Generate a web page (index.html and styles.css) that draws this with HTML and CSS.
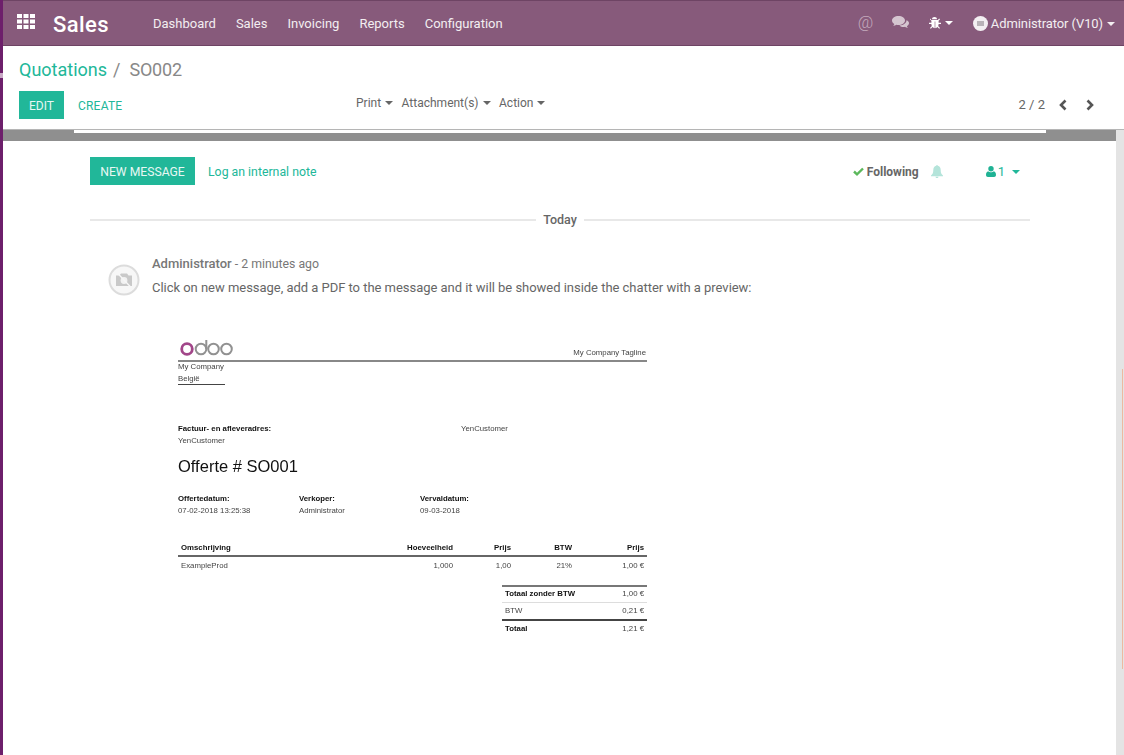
FILE: index.html
```html
<!DOCTYPE html>
<html lang="en">
<head>
  <meta charset="UTF-8">
  <meta name="viewport" content="width=device-width, initial-scale=1.0">
  <link rel="stylesheet" href="styles.css">
  <title>SO002 - Odoo</title>
</head>
<body>
  <div class="app">
    <nav class="navbar">
      <svg class="apps-icon" width="18" height="16" viewBox="0 0 18 16"><path fill="#fff" d="M0 0h5v4H0zM6.500 0h5v4h-5zM13 0h5v4h-5zM0 5.500h5v4H0zM6.500 5.500h5v4h-5zM13 5.500h5v4h-5zM0 11h5v4H0zM6.500 11h5v4h-5zM13 11h5v4h-5z"/></svg>
      <span class="brand">Sales</span>
      <ul class="menu">
        <li>Dashboard</li>
        <li>Sales</li>
        <li>Invoicing</li>
        <li>Reports</li>
        <li>Configuration</li>
      </ul>
      <div class="systray">
        <span class="at-icon">@</span>
        <svg class="chat-icon" width="17" height="15" viewBox="0 0 17 15"><path fill="#d5c5d0" d="M6.500 1C3 1 0 3 0 5.500c0 1.400.9 2.700 2.300 3.500-.2.700-.6 1.300-1.100 1.800 1 0 2.200-.5 3-1.100.7.200 1.500.3 2.300.3 3.600 0 6.500-2 6.500-4.500S10.100 1 6.500 1z"/><path fill="#d5c5d0" d="M14.500 5.300c0 2.800-3 5-7 5.200 1 1 2.500 1.500 4 1.500.5 0 1-.1 1.500-.2.800.7 2 1.200 3 1.200-.5-.5-.9-1.100-1.100-1.800 1.300-.8 2.100-2 2.100-3.200 0-1-.9-2-2.500-2.700z"/></svg>
        <span class="bug">
          <svg width="13" height="14" viewBox="0 0 13 14"><path fill="#fff" d="M4 3.200C4 1.800 5.100 1 6.500 1S9 1.800 9 3.200zM3.200 4h6.600l1.400-1.400.8.800L10.600 4.800v2h2.400v1.100h-2.400c0 .8-.2 1.500-.5 2.100l1.900 1.900-.8.800-1.700-1.700c-.6.700-1.400 1.100-2.200 1.200V5.500h-.6v6.700c-.8-.1-1.600-.5-2.200-1.200L2.800 12.700 2 11.900 3.900 10c-.3-.6-.5-1.300-.5-2.100H1V6.800h2.400v-2L1.900 3.400l.8-.8z"/></svg>
          <i class="caret"></i>
        </span>
        <span class="user">
          <span class="user-avatar"><i></i></span>
          <span>Administrator (V10)</span>
          <i class="caret"></i>
        </span>
      </div>
    </nav>

    <header class="control-panel">
      <ol class="breadcrumb">
        <li class="crumb-link">Quotations</li>
        <li class="crumb-sep">/</li>
        <li class="crumb-active">SO002</li>
      </ol>
      <div class="cp-row">
        <div class="cp-buttons">
          <button class="btn btn-primary btn-edit">EDIT</button>
          <button class="btn btn-link">CREATE</button>
        </div>
        <div class="cp-sidebar">
          <span>Print<i class="caret"></i></span>
          <span>Attachment(s)<i class="caret"></i></span>
          <span>Action<i class="caret"></i></span>
        </div>
        <div class="cp-pager">
          <span class="pager-value">2 / 2</span>
          <svg width="10" height="12" viewBox="0 0 10 12"><path fill="none" stroke="#555" stroke-width="2.600" d="M7.500 1.500 3 6l4.500 4.500"/></svg>
          <svg width="10" height="12" viewBox="0 0 10 12"><path fill="none" stroke="#555" stroke-width="2.600" d="M2.500 1.500 7 6l-4.500 4.500"/></svg>
        </div>
      </div>
    </header>

    <main class="content">
      <div class="form-view">
        <div class="sheet-band"><div class="sheet-end"></div></div>
        <section class="chatter">
          <div class="chatter-top">
            <div class="chatter-actions">
              <button class="btn btn-primary btn-message">NEW MESSAGE</button>
              <a class="note-link">Log an internal note</a>
            </div>
            <div class="chatter-follow">
              <span class="following">
                <svg width="11" height="9" viewBox="0 0 11 9"><path fill="none" stroke="#5cb85c" stroke-width="2.400" d="M1 4.500 4 7.300 10 1.500"/></svg>
                <span>Following</span>
              </span>
              <svg class="bell" width="12" height="13" viewBox="0 0 12 13"><path fill="#b4e4da" d="M6 0c.5 0 .8.300.8.800C8.700 1.200 9.700 2.700 9.700 5c0 3 .8 4.300 2.300 5.500v.7H0v-.7C1.500 9.300 2.300 8 2.300 5c0-2.300 1-3.800 2.900-4.200C5.200.3 5.500 0 6 0zM4.500 11.700h3C7.500 12.500 6.800 13 6 13s-1.500-.5-1.500-1.300z"/></svg>
              <span class="followers">
                <svg width="10" height="11" viewBox="0 0 10 11"><path fill="#1fb294" d="M5 0a2.700 2.700 0 1 1 0 5.400A2.700 2.700 0 0 1 5 0zM2.200 5.200C3 6 4 6.300 5 6.300s2-.3 2.800-1.100C9.200 5.500 10 6.800 10 9c0 1.200-.8 2-1.900 2H1.900C.8 11 0 10.200 0 9c0-2.200.8-3.500 2.200-3.800z"/></svg>
                <span>1</span>
                <i class="caret"></i>
              </span>
            </div>
          </div>

          <div class="date-sep"><span>Today</span></div>

          <article class="message">
            <div class="avatar">
              <svg width="32" height="32" viewBox="0 0 32 32">
                <circle cx="16" cy="16" r="14.500" fill="#f7f7f7" stroke="#dcdcdc" stroke-width="2"/>
                <path fill="#c9c9c9" d="M8 11.500h3.500l1.500-2h6l1.500 2H24v10.500H8z"/>
                <circle cx="16" cy="16.500" r="3.400" fill="#f2f2f2"/>
                <path stroke="#f7f7f7" stroke-width="1.300" d="M7 6.500 25 25.500"/>
              </svg>
            </div>
            <div class="message-body">
              <p class="message-head"><b>Administrator</b> - 2 minutes ago</p>
              <p class="message-text">Click on new message, add a PDF to the message and it will be showed inside the chatter with a preview:</p>

              <div class="pdf">
                <div class="pdf-head">
                  <svg class="odoo-logo" width="54" height="16" viewBox="0 0 54 16">
                    <circle cx="7" cy="9" r="5.300" fill="none" stroke="#a24689" stroke-width="2.800"/>
                    <circle cx="21" cy="9" r="5.300" fill="none" stroke="#919191" stroke-width="2"/>
                    <path stroke="#919191" stroke-width="2" d="M26.300 0v9"/>
                    <circle cx="33.500" cy="9" r="5.300" fill="none" stroke="#919191" stroke-width="2"/>
                    <circle cx="46.500" cy="9" r="5.300" fill="none" stroke="#919191" stroke-width="2"/>
                  </svg>
                  <span class="pdf-tagline">My Company Tagline</span>
                </div>
                <div class="pdf-company">
                  <div>My Company</div>
                  <div>België</div>
                </div>
                <div class="pdf-address">
                  <div>
                    <div class="pdf-bold">Factuur- en afleveradres:</div>
                    <div>YenCustomer</div>
                  </div>
                  <div>YenCustomer</div>
                </div>
                <h2 class="pdf-title">Offerte # SO001</h2>
                <div class="pdf-info">
                  <div><div class="pdf-bold">Offertedatum:</div><div>07-02-2018 13:25:38</div></div>
                  <div><div class="pdf-bold">Verkoper:</div><div>Administrator</div></div>
                  <div><div class="pdf-bold">Vervaldatum:</div><div>09-03-2018</div></div>
                </div>
                <div class="pdf-lines">
                  <div class="line-row line-head">
                    <span class="cell-name">Omschrijving</span><span>Hoeveelheid</span><span>Prijs</span><span>BTW</span><span>Prijs</span>
                  </div>
                  <div class="line-row">
                    <span class="cell-name">ExampleProd</span><span>1,000</span><span>1,00</span><span>21%</span><span>1,00 €</span>
                  </div>
                </div>
                <div class="pdf-totals">
                  <div class="total-row total-first"><span class="pdf-bold">Totaal zonder BTW</span><span>1,00 €</span></div>
                  <div class="total-row"><span>BTW</span><span>0,21 €</span></div>
                  <div class="total-row total-last"><span class="pdf-bold">Totaal</span><span>1,21 €</span></div>
                </div>
              </div>
            </div>
          </article>
        </section>
      </div>
      <div class="scrollbar"><div class="scroll-thumb"></div></div>
    </main>
  </div>
</body>
</html>
```

FILE: styles.css
```css
* {
  box-sizing: border-box;
}

html,
body {
  height: 100%;
  margin: 0;
  overflow: hidden;
}

body {
  font-family: Roboto, sans-serif;
  font-size: 13px;
  color: #666;
  background-color: #fff;
}

ul,
ol {
  list-style: none;
  margin: 0;
  padding: 0;
}

p,
h2 {
  margin: 0;
}

.app {
  display: flex;
  flex-direction: column;
  position: relative;
  height: 100%;
  border-left: 3px solid #6d1f6b;
}

/* little handle on the left strip */
.app::before {
  content: "";
  position: absolute;
  top: 73px;
  left: -3px;
  width: 3px;
  height: 5px;
  background-color: #c9a8c6;
}

.caret {
  display: inline-block;
  margin-left: 4px;
  border-top: 4px solid currentColor;
  border-left: 4px solid transparent;
  border-right: 4px solid transparent;
  vertical-align: 2px;
}

/* navbar */
.navbar {
  display: flex;
  align-items: center;
  flex: none;
  height: 46px;
  padding: 0 9px 0 14px;
  color: #fff;
  background-color: #875a7b;
  border-top: 1px solid #6e4464;
  border-bottom: 1px solid #6e4464;
}

.apps-icon {
  flex: none;
  margin-top: -2px;
}

.brand {
  margin: 3px 0 0 18px;
  width: 100px;
  font-size: 22px;
  font-weight: 500;
  letter-spacing: 0.4px;
}

.menu {
  display: flex;
  gap: 20px;
  margin-top: 1px;
  color: #f3eef1;
}

.systray {
  display: flex;
  align-items: center;
  margin-left: auto;
  margin-top: 1px;
}

.at-icon {
  width: 15px;
  margin-top: -3px;
  font-size: 17px;
  font-weight: 300;
  color: #c4a9bc;
}

.chat-icon {
  margin: -3px 0 0 19px;
}

.bug {
  display: flex;
  align-items: center;
  margin: -2px 0 0 19px;
}

.bug .caret {
  margin-left: 4px;
  vertical-align: 0;
}

.user {
  display: flex;
  align-items: center;
  margin-left: 20px;
  color: #f3eef1;
  letter-spacing: -0.1px;
  white-space: nowrap;
}

.user .caret {
  margin-left: 4px;
}

.user-avatar {
  display: inline-flex;
  align-items: center;
  justify-content: center;
  width: 15px;
  height: 15px;
  margin-right: 3px;
  border-radius: 50%;
  background-color: #f3eff2;
}

.user-avatar i {
  width: 7px;
  height: 5px;
  background-color: #b9b3b8;
}

/* control panel */
.control-panel {
  flex: none;
  height: 84px;
  padding: 10px 16px 0;
  border-bottom: 1px solid #b5b5b5;
}

.breadcrumb {
  display: flex;
  align-items: baseline;
  height: 27px;
  font-size: 18px;
  line-height: 27px;
}

.crumb-link {
  color: #21b799;
}

.crumb-sep {
  margin: 0 9px 0 6px;
  color: #888;
}

.crumb-active {
  color: #888;
  letter-spacing: -0.2px;
}

.cp-row {
  display: flex;
  align-items: flex-start;
  margin-top: 8px;
}

.btn {
  font-family: inherit;
  font-size: 12px;
  height: 28px;
  padding: 0 10px;
  border: 0;
  background: none;
}

.btn-primary {
  padding-top: 1px;
  color: #e8f7f4;
  background-color: #21b799;
}

.btn-link {
  padding-top: 1px;
  color: #21b799;
  letter-spacing: 0.2px;
}

.btn-edit {
  width: 45px;
}

.cp-buttons {
  display: flex;
  gap: 4px;
  width: 337px;
}

.cp-sidebar {
  display: flex;
  gap: 8.500px;
  padding-top: 5px;
  font-size: 12px;
  color: #666;
}

.cp-pager {
  display: flex;
  align-items: center;
  gap: 13px;
  margin-left: auto;
  padding: 6px 13px 0 0;
}

.cp-pager svg + svg {
  margin-left: 4px;
}

/* form */
.content {
  display: flex;
  flex: 1;
  min-height: 0;
}

.form-view {
  flex: 1;
  min-width: 0;
}

.sheet-band {
  height: 11px;
  padding: 0 70px 0 71px;
  background-color: #8f8f8f;
}

.sheet-end {
  height: 3px;
  background-color: #fff;
}

.scrollbar {
  flex: none;
  position: relative;
  width: 8px;
  background-color: #e4e4e4;
}

.scroll-thumb {
  position: absolute;
  top: 239px;
  left: 6px;
  width: 1px;
  height: 300px;
  background-color: #eeb9a0;
}

/* chatter */
.chatter {
  padding: 16px 86px 0 87px;
}

.chatter-top {
  display: flex;
  justify-content: space-between;
  align-items: center;
}

.chatter-actions {
  display: flex;
  align-items: center;
  gap: 13px;
}

.btn-message {
  width: 105px;
  padding: 2px 0 0;
  font-size: 12.200px;
}

.note-link {
  margin-top: 1px;
  color: #21b799;
  font-size: 12.300px;
}

.chatter-follow {
  display: flex;
  align-items: center;
  margin-top: 1px;
  padding-right: 10px;
}

.following {
  display: flex;
  align-items: center;
  gap: 3px;
  font-size: 12px;
  font-weight: 700;
  color: #666;
}

.bell {
  margin-left: 12px;
}

.followers {
  display: flex;
  align-items: center;
  gap: 2px;
  margin-left: 43px;
  color: #21b799;
}

.followers .caret {
  margin-left: 5px;
}

.date-sep {
  position: relative;
  display: flex;
  justify-content: center;
  margin-top: 24px;
  height: 22px;
  line-height: 22px;
  font-weight: 500;
  font-size: 12.500px;
}

.date-sep::before {
  content: "";
  position: absolute;
  top: 10px;
  left: 0;
  right: 0;
  height: 2px;
  background-color: #e8e8e8;
}

.date-sep span {
  position: relative;
  padding: 0 7px;
  background-color: #fff;
}

.message {
  display: flex;
  margin-top: 23px;
}

.avatar {
  flex: none;
  width: 62px;
  padding: 10px 0 0 18px;
}

.message-head {
  line-height: 20px;
  font-size: 12.300px;
  color: #777;
}

.message-head b {
  font-size: 13px;
  font-weight: 500;
}

.message-text {
  margin-top: 4px;
  line-height: 20px;
  letter-spacing: -0.03px;
}

/* pdf preview */
.pdf {
  width: 469px;
  margin: 36px 0 0 26px;
  font-family: "Liberation Sans", Arial, sans-serif;
  font-size: 7.800px;
  line-height: 12px;
  color: #444;
  filter: blur(0.3px);
}

.pdf-bold {
  font-weight: 700;
  color: #111;
}

.pdf-head {
  display: flex;
  justify-content: space-between;
  align-items: flex-end;
  height: 28px;
  padding: 0 1px 4px 2px;
  border-bottom: 2px solid #888;
}

.pdf-tagline {
  margin-bottom: -3px;
}

.pdf-company {
  width: 47px;
  height: 24px;
  margin-top: -1px;
  border-bottom: 1px solid #444;
  white-space: nowrap;
}

.pdf-address {
  display: grid;
  grid-template-columns: 283px 1fr;
  margin-top: 38px;
}

.pdf-title {
  margin-top: 7px;
  font-size: 16.500px;
  font-weight: 400;
  line-height: 24px;
  color: #111;
}

.pdf-info {
  display: grid;
  grid-template-columns: 121px 121px 1fr;
  margin-top: 15px;
}

.pdf-lines {
  margin-top: 21px;
}

.line-row {
  display: grid;
  grid-template-columns: 1fr 100px 58px 61px 72px;
  padding: 0 3px;
  height: 18px;
  line-height: 17px;
  text-align: right;
}

.line-head {
  height: 19px;
  line-height: 19px;
  font-weight: 700;
  color: #111;
  border-bottom: 2px solid #666;
}

.cell-name {
  text-align: left;
}

.pdf-totals {
  width: 145px;
  margin: 10px 0 0 auto;
}

.total-row {
  display: flex;
  justify-content: space-between;
  height: 16px;
  padding: 0 3px;
  line-height: 16px;
}

.total-first {
  height: 18px;
  line-height: 13px;
  border-top: 2px solid #777;
  border-bottom: 1px solid #ddd;
}

.total-last {
  height: 17px;
  border-top: 2px solid #444;
}
```
